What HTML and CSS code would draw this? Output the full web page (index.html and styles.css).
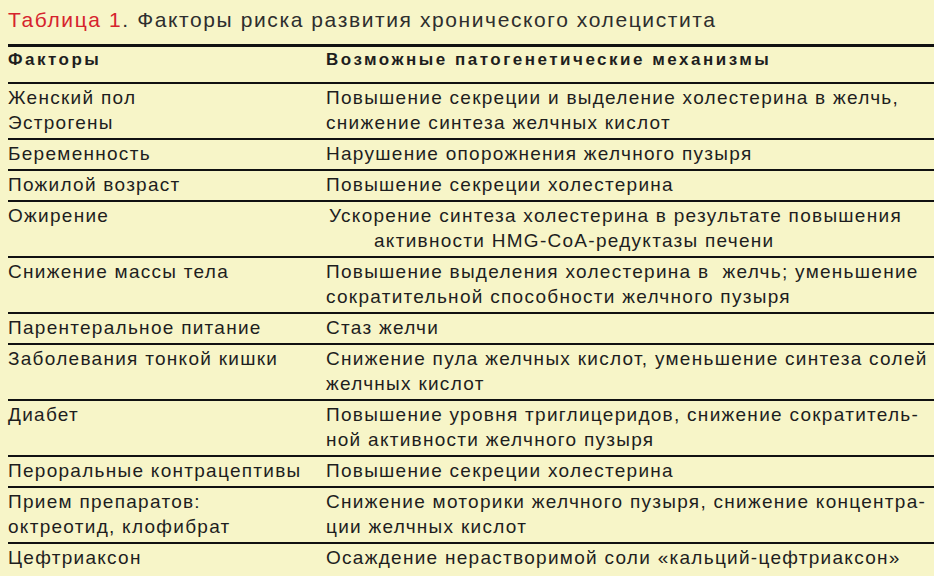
FILE: index.html
```html
<!DOCTYPE html>
<html lang="ru">
<head>
<meta charset="utf-8">
<title>Таблица 1</title>
<link rel="stylesheet" href="styles.css">
</head>
<body>
<div class="page">
  <h1 class="title"><span class="title-num">Таблица 1</span>. Факторы риска развития хронического холецистита</h1>
  <div class="table">
    <div class="row head">
      <div class="cell c1">Факторы</div>
      <div class="cell c2">Возможные патогенетические механизмы</div>
    </div>
    <div class="row">
      <div class="cell c1">Женский пол<br>Эстрогены</div>
      <div class="cell c2">Повышение секреции и выделение холестерина в желчь,<br>снижение синтеза желчных кислот</div>
    </div>
    <div class="row">
      <div class="cell c1">Беременность</div>
      <div class="cell c2">Нарушение опорожнения желчного пузыря</div>
    </div>
    <div class="row">
      <div class="cell c1">Пожилой возраст</div>
      <div class="cell c2">Повышение секреции холестерина</div>
    </div>
    <div class="row">
      <div class="cell c1">Ожирение</div>
      <div class="cell c2"><span class="shift">Ускорение синтеза холестерина в результате повышения</span><br><span class="indent">активности HMG-CoA-редуктазы печени</span></div>
    </div>
    <div class="row">
      <div class="cell c1">Снижение массы тела</div>
      <div class="cell c2">Повышение выделения холестерина в&nbsp; желчь; уменьшение<br>сократительной способности желчного пузыря</div>
    </div>
    <div class="row">
      <div class="cell c1">Парентеральное питание</div>
      <div class="cell c2">Стаз желчи</div>
    </div>
    <div class="row">
      <div class="cell c1">Заболевания тонкой кишки</div>
      <div class="cell c2">Снижение пула желчных кислот, уменьшение синтеза солей<br>желчных кислот</div>
    </div>
    <div class="row">
      <div class="cell c1">Диабет</div>
      <div class="cell c2">Повышение уровня триглицеридов, снижение сократитель-<br>ной активности желчного пузыря</div>
    </div>
    <div class="row">
      <div class="cell c1">Пероральные контрацептивы</div>
      <div class="cell c2">Повышение секреции холестерина</div>
    </div>
    <div class="row">
      <div class="cell c1">Прием препаратов:<br>октреотид, клофибрат</div>
      <div class="cell c2">Снижение моторики желчного пузыря, снижение концентра-<br>ции желчных кислот</div>
    </div>
    <div class="row">
      <div class="cell c1">Цефтриаксон</div>
      <div class="cell c2">Осаждение нерастворимой соли «кальций-цефтриаксон»</div>
    </div>
  </div>
</div>
</body>
</html>
```

FILE: styles.css
```css
html, body {
  margin: 0;
  padding: 0;
}
body {
  background: #f7f5c8;
  font-family: "Liberation Sans", Arial, sans-serif;
  color: #1e1e1e;
  width: 934px;
  height: 576px;
  overflow: hidden;
}
.page {
  padding: 6px 0 0 8px;
}
.title {
  margin: 0;
  font-size: 21px;
  font-weight: normal;
  line-height: 28px;
  color: #2e2e2e;
  letter-spacing: 1.6px;
  height: 38px;
}
.title-num {
  color: #d6232d;
}
.table {
  border-top: 3px solid #111;
}
.row {
  display: grid;
  grid-template-columns: 318px 1fr;
  border-top: 2px solid #111;
  padding: 1px 0 3px;
  font-size: 19px;
  line-height: 25px;
  letter-spacing: 1.28px;
}
.row.head {
  border-top: none;
  padding: 1px 0 10px;
  line-height: 24px;
  font-weight: bold;
  font-size: 17px;
  letter-spacing: 2.5px;
}
.cell {
  white-space: nowrap;
}
.shift {
  padding-left: 3px;
}
.indent {
  padding-left: 48px;
}
```
